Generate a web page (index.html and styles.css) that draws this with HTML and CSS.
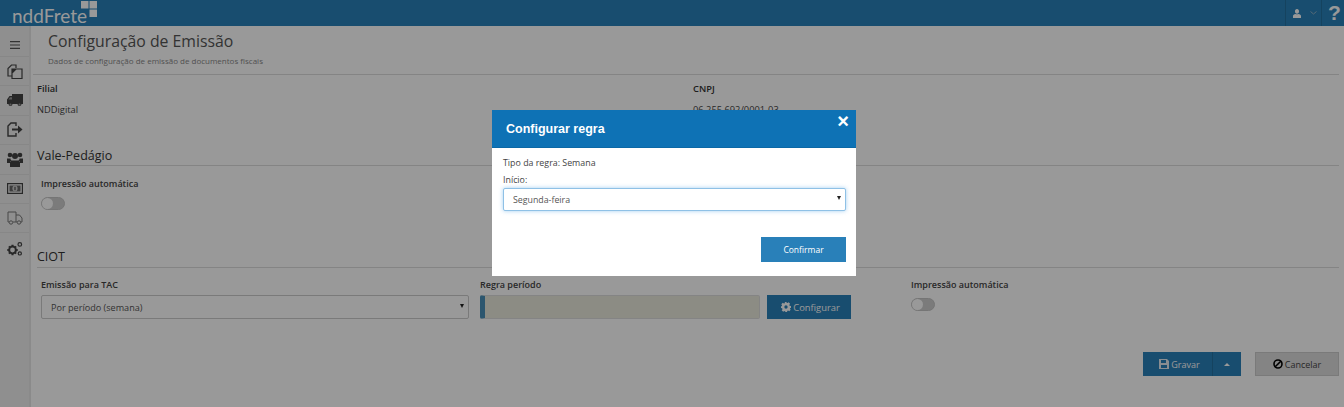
FILE: index.html
```html
<!DOCTYPE html>
<html lang="pt-BR">
<head>
<meta charset="utf-8">
<title>Configuração de Emissão</title>
<link rel="stylesheet" href="styles.css">
</head>
<body>
<header class="topbar">
  <div class="logo"><span class="logo-text">nddFrete</span>
    <svg class="logo-mark" width="16" height="16" viewBox="0 0 16 16"><path d="M0 0h7.500v7.500H0zM8.500 0H16v7.500H8.500zM8.500 8.500H16V16H8.500z" fill="#fff"/></svg>
  </div>
  <div class="top-actions">
    <div class="top-cell user">
      <svg width="8" height="9" viewBox="0 0 9 10"><path d="M4.500 0C6 0 6.800 1.100 6.800 2.600S6 5.200 4.500 5.200 2.200 4.100 2.200 2.600 3 0 4.500 0zM0 10V7.800C0 6.500 1.200 5.800 2.800 5.500c1 .6 2.400.6 3.400 0C7.800 5.800 9 6.500 9 7.800V10z" fill="#fff"/></svg>
      <svg width="7" height="4" viewBox="0 0 7 4"><path d="M.5.500l3 2.500 3-2.500" fill="none" stroke="#8fb0c6" stroke-width="1"/></svg>
    </div>
    <div class="top-cell help">?</div>
  </div>
</header>
<div class="layout">
  <nav class="sidebar">
    <a class="side-item side-menu"><svg width="10" height="8" viewBox="0 0 10 8"><path d="M0 .600h10M0 4h10M0 7.400h10" stroke="#555" stroke-width="1.200"/></svg></a>
    <a class="side-item"><svg width="16" height="15" viewBox="0 0 16 15"><path d="M1 9V4.500L4.500 1H9v3M5.500 12H1V9M5 5v9.500h10V5zM5 9l4-4h6" fill="none" stroke="#444" stroke-width="1.200"/><path d="M5 5h4L5 9z" fill="#444"/></svg></a>
    <a class="side-item"><svg width="16" height="13" viewBox="0 0 16 13"><path d="M16 0H5v2H2.500L0 5.500V10h1.500a2 2 0 0 0 4 0h5a2 2 0 0 0 4 0H16z" fill="#444"/><path d="M1.500 5.500L3 3.300h2v2.200z" fill="#999"/><circle cx="3.500" cy="10.500" r="1" fill="#999"/><circle cx="12.500" cy="10.500" r="1" fill="#999"/></svg></a>
    <a class="side-item"><svg width="16" height="15" viewBox="0 0 16 15"><path d="M9 4V1H4L1 4v10h8v-3" fill="none" stroke="#444" stroke-width="1.400"/><path d="M5 6.500h6V3.500l4.500 4-4.500 4V8.500H5z" fill="#444"/></svg></a>
    <a class="side-item"><svg width="16" height="15" viewBox="0 0 16 15"><g fill="#444"><circle cx="3" cy="3" r="2.300"/><circle cx="13" cy="3" r="2.300"/><circle cx="8" cy="4" r="3"/><path d="M0 6.500h3.500a4 4 0 0 0 1 2.500H3v2H0zM16 6.500h-3.500a4 4 0 0 1-1 2.500H13v2h3z"/><path d="M4 8.500h8l1 1.500v5H3v-5z"/></g></svg></a>
    <a class="side-item"><svg width="16" height="11" viewBox="0 0 16 11"><rect x=".6" y=".6" width="14.800" height="9.800" fill="none" stroke="#444" stroke-width="1.200"/><rect x="2.500" y="2.500" width="11" height="6" fill="#666"/><ellipse cx="8" cy="5.500" rx="2.600" ry="3" fill="#ccc"/><path d="M8 3.800v3.400" stroke="#333" stroke-width="1"/></svg></a>
    <a class="side-item"><svg width="16" height="14" viewBox="0 0 16 14"><path d="M1 11V1h8v10M9 4h3.500L15 7v4h-1.500M1 11h1M6 11h4" fill="none" stroke="#777" stroke-width="1"/><circle cx="4" cy="11.500" r="1.700" fill="none" stroke="#777"/><circle cx="12" cy="11.500" r="1.700" fill="none" stroke="#777"/></svg></a>
    <a class="side-item"><svg width="16" height="15" viewBox="0 0 16 15"><g fill="none" stroke="#444"><circle cx="5.500" cy="9" r="3.400" stroke-width="2"/><path d="M5.500 3.800v1.500M5.500 12.700v1.500M.3 9h1.500M9.200 9h1.500M1.900 5.400l1 1M8.100 11.600l1 1M1.900 12.600l1-1M8.100 6.400l1-1" stroke-width="2"/><circle cx="12.800" cy="3.400" r="1.800" stroke-width="1.200"/><circle cx="12.800" cy="12.400" r="1.600" stroke-width="1.200"/></g></svg></a>
  </nav>
  <main class="content">
    <div class="page-head">
      <h1 class="page-title">Configuração de Emissão</h1>
      <p class="page-sub">Dados de configuração de emissão de documentos fiscais</p>
    </div>
    <div class="info-row">
      <div class="info-col"><strong>Filial</strong><span>NDDigital</span></div>
      <div class="info-col"><strong>CNPJ</strong><span>06.255.692/0001-03</span></div>
    </div>
    <h2 class="section-title vale">Vale-Pedágio</h2>
    <div class="section-body">
      <label class="field-label">Impressão automática</label>
      <span class="toggle"></span>
    </div>
    <h2 class="section-title ciot">CIOT</h2>
    <div class="ciot-row">
      <div class="col-tac">
        <label class="field-label">Emissão para TAC</label>
        <div class="select-wrap"><select class="select"><option>Por período (semana)</option></select></div>
      </div>
      <div class="col-rule">
        <label class="field-label">Regra período</label>
        <div class="rule-line">
          <input class="rule-input" type="text" disabled>
          <button class="btn btn-blue btn-config"><svg width="10" height="10" viewBox="0 0 24 24"><path d="M24 14.500v-5l-3.300-.6a9 9 0 0 0-.8-2l1.900-2.700-3.500-3.500-2.700 1.900a9 9 0 0 0-2-.8L13 0H9.500l-.6 2.800a9 9 0 0 0-2 .8L4.200 1.700.7 5.200l1.900 2.700a9 9 0 0 0-.8 2L0 10v4.500l2.800.6c.2.700.4 1.400.8 2l-1.900 2.700 3.500 3.500 2.700-1.900c.6.400 1.300.6 2 .8l.6 1.800h4l.6-2.800c.7-.2 1.400-.4 2-.8l2.700 1.900 3.500-3.500-1.900-2.700c.4-.6.600-1.300.8-2zM12 16a4 4 0 1 1 0-8 4 4 0 0 1 0 8z" fill="#fff"/></svg> Configurar</button>
        </div>
      </div>
      <div class="col-print">
        <label class="field-label">Impressão automática</label>
        <span class="toggle"></span>
      </div>
    </div>
    <div class="footer-actions">
      <div class="split">
        <button class="btn btn-blue btn-save"><svg width="10" height="10" viewBox="0 0 10 10"><path d="M0 0h8l2 2v8H0zM2 1v3h5V1zM2 6v3h6V6z" fill="#e4ecf2" fill-rule="evenodd"/></svg> Gravar</button>
        <button class="btn btn-blue btn-caret"><span class="caret-up"></span></button>
      </div>
      <button class="btn btn-gray"><svg width="10" height="10" viewBox="0 0 10 10"><circle cx="5" cy="5" r="4" fill="none" stroke="#000" stroke-width="1.600"/><path d="M2.200 7.800l5.600-5.600" stroke="#000" stroke-width="1.600"/></svg> Cancelar</button>
    </div>
  </main>
</div>
<div class="backdrop"></div>
<section class="modal">
  <div class="modal-head">
    <h3 class="modal-title">Configurar regra</h3>
    <span class="modal-close">×</span>
  </div>
  <div class="modal-body">
    <p class="modal-line">Tipo da regra: Semana</p>
    <label class="modal-label">Início:</label>
    <div class="select-wrap"><select class="select select-focus"><option>Segunda-feira</option></select></div>
    <div class="modal-foot"><button class="btn btn-blue btn-confirm">Confirmar</button></div>
  </div>
</section>
</body>
</html>
```
FILE: styles.css
```css
* { box-sizing: border-box; }
html, body { height: 100%; }
body { margin: 0; overflow: hidden; background: #fff; color: #444; font: 9.300px "Open Sans", sans-serif; }
h1, h2, h3, p { margin: 0; font-weight: 400; }

.topbar { height: 26px; background: #2980b9; display: flex; justify-content: space-between; color: #fff; }
.logo { display: flex; padding-left: 12px; position: relative; width: 110px; height: 26px; }
.logo-text { font: 400 19px/32px Lato, sans-serif; }
.logo-mark { margin: 1px 0 0 -6px; }
.top-actions { display: flex; }
.top-cell { display: flex; align-items: center; border-left: 1px solid #23709f; }
.user { width: 36px; gap: 9px; padding-left: 7px; }
.help { width: 23px; justify-content: center; font: 700 21px/26px "Liberation Sans", sans-serif; padding-left: 3px; }

.layout { display: flex; height: 381px; }
.sidebar { width: 31px; background: #eee; border-right: 2px solid #e6e6e6; flex: none; }
.side-item { display: flex; align-items: center; justify-content: center; height: 29.400px; border-bottom: 1px solid #e2e2e2; }
.side-menu { height: 31px; padding-top: 7px; }
.side-item:last-child { border-bottom: 0; }

.content { flex: 1; min-width: 0; padding: 0 5px 0 6px; }
.page-head { margin-left: -4px; padding-left: 15px; height: 49px; border-bottom: 1px solid #ddd; }
.page-title { font-size: 15.800px; line-height: 24px; padding-top: 3px; height: 27px; color: #555; }
.page-sub { font-size: 8px; line-height: 12px; margin-top: 1px; color: #888; padding-top: 1px; }
.info-row { display: flex; padding-top: 7px; height: 72px; }
.info-col { display: flex; flex-direction: column; gap: 7px; }
.info-col:first-child { width: 656px; }
.info-col strong { font-weight: 600; line-height: 14px; color: #333; }
.info-col span { line-height: 14px; }
.section-title { font-size: 12.500px; line-height: 18px; height: 20px; border-bottom: 1px solid #ddd; color: #333; }
.section-title.vale { height: 19px; }
.section-body { padding: 11px 0 0 4px; height: 82px; }
.field-label { display: block; font-weight: 600; font-size: 9px; line-height: 14px; color: #444; }
.toggle { display: block; width: 24px; height: 13px; border-radius: 7px; background: #cdcdcd; margin-top: 6px; border: 1px solid #c4c4c4; position: relative; }
.toggle::before { content: ""; position: absolute; left: 0; top: 0; width: 11px; height: 11px; border-radius: 50%; background: #fff; }
.ciot-row { display: flex; padding: 10px 0 0 4px; height: 71px; }
.col-tac { width: 439px; }
.col-tac .select-wrap { width: 428px; margin-top: 3px; }
.col-rule { width: 431px; }
.rule-line { display: flex; gap: 7px; margin-top: 3px; }
.rule-input { width: 280px; height: 24px; border: 1px solid #ddd; border-left: 5px solid #4a90b8; background: #eaeadc; border-radius: 2px; padding: 0; }
.col-print { flex: 1; }

.select-wrap { position: relative; }
.select-wrap::after { content: ""; position: absolute; right: 5px; top: 9px; border: 2.500px solid transparent; border-top: 4px solid #222; border-bottom: 0; }
.select { display: block; width: 100%; height: 24px; appearance: none; -webkit-appearance: none; background: #fff; border: 1px solid #ccc; border-radius: 2px; padding: 0 9px; font: 9.100px "Open Sans", sans-serif; color: #555; outline: 0; }
.select-focus { height: 23px; font-size: 8.800px; border-color: #8fc1e6; box-shadow: 0 0 4px rgba(102,175,233,.6); }
.modal .select-wrap::after { top: 8px; }

.btn { display: inline-flex; align-items: center; justify-content: center; gap: 2px; border: 0; padding: 0; height: 24px; font: 9px "Open Sans", sans-serif; color: #fff; }
.btn-blue { background: #2980b9; }
.btn-config { width: 84px; padding-left: 3px; font-size: 9.400px; }
.footer-actions { display: flex; justify-content: flex-end; gap: 14px; padding-top: 13px; }
.split { display: flex; }
.btn-save { width: 70px; padding-left: 4px; border-right: 1px solid #23709f; }
.btn-caret { width: 28px; }
.caret-up { border: 3px solid transparent; border-bottom: 3px solid #fff; border-top: 0; }
.btn-gray { width: 84px; background: #ddd; border: 1px solid #ccc; color: #444; }

.backdrop { position: fixed; inset: 0; background: rgba(0,0,0,.4); }
.modal { position: fixed; left: 492px; top: 110px; width: 364px; height: 166px; background: #fff; font-size: 8.850px; }
.modal-head { height: 38px; background: #0e72b5; border-bottom: 1px solid #0b68a6; padding-left: 14px; position: relative; color: #fff; }
.modal-title { font: 700 12.500px/39px "Liberation Sans", sans-serif; }
.modal-close { position: absolute; right: 7px; top: 1px; font: 700 20px/20px "Liberation Sans", sans-serif; }
.modal-body { padding: 8px 10px 0 11px; }
.modal-line { line-height: 14px; }
.modal-label { display: block; line-height: 14px; margin-top: 3px; }
.modal-body .select-wrap { margin-top: 1px; }
.modal-foot { display: flex; justify-content: flex-end; margin-top: 26px; }
.btn-confirm { width: 85px; height: 25px; font-size: 8.500px; }
```
